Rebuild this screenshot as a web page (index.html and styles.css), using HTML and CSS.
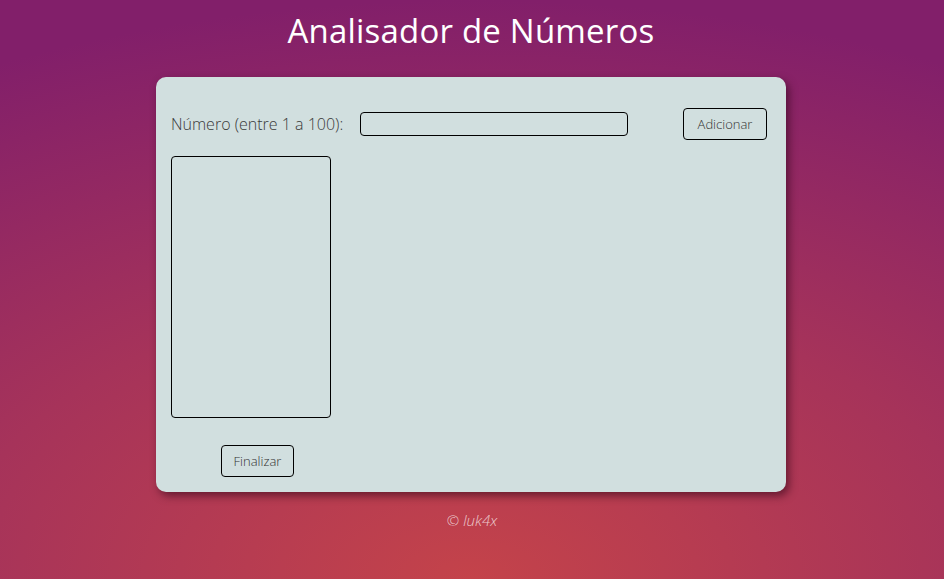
FILE: index.html
```html
<!DOCTYPE html>
<html lang="pt-BR">
<head>
<meta charset="utf-8">
<title>Analisador de Números</title>
<link rel="stylesheet" href="styles.css">
</head>
<body>
  <header class="header">
    <h1 class="title">Analisador de Números</h1>
  </header>
  <main class="card">
    <div class="row">
      <label class="label" for="num">Número (entre 1 a 100):</label>
      <input class="input" id="num" type="number">
      <button class="btn btn-add">Adicionar</button>
    </div>
    <select class="list" size="10"></select>
    <div class="actions">
      <button class="btn btn-end">Finalizar</button>
    </div>
  </main>
  <footer class="footer">&copy; luk4x</footer>
</body>
</html>
```
FILE: styles.css
```css
html, body {
  margin: 0;
  height: 100%;
}
body {
  font-family: "Open Sans", "Liberation Sans", sans-serif;
  font-weight: 300;
  background: radial-gradient(ellipse 110% 100% at 50% 100%, #c4434a 0%, #a6335a 50%, #821f6a 100%);
  background-color: #821f6a;
  display: flex;
  flex-direction: column;
  align-items: center;
  padding-right: 2px;
  box-sizing: border-box;
}
.header {
  padding-top: 9px;
  height: 77px;
  box-sizing: border-box;
}
.title {
  margin: 0;
  color: #fff;
  font-size: 33px;
  font-weight: 400;
  line-height: 44px;
  letter-spacing: 0.2px;
}
.card {
  width: 630px;
  height: 415px;
  box-sizing: border-box;
  background: #d1dfdf;
  border-radius: 10px;
  box-shadow: 3px 4px 8px rgba(40, 0, 20, 0.55);
  padding: 31px 19px 15px 15px;
  display: flex;
  flex-direction: column;
}
.row {
  display: flex;
  align-items: center;
  height: 32px;
}
.label {
  font-size: 16px;
  color: #3a3a3a;
  width: 189px;
  white-space: nowrap;
}
.input {
  width: 268px;
  height: 24px;
  box-sizing: border-box;
  border: 1px solid #000;
  border-radius: 4px;
  background: transparent;
  padding: 0 4px;
  margin: 0;
}
.btn {
  font-family: inherit;
  font-weight: 300;
  font-size: 13px;
  color: #333;
  background: transparent;
  border: 1px solid #000;
  border-radius: 4px;
  height: 32px;
  padding: 0;
  margin: 0;
}
.btn-add {
  width: 84px;
  margin-left: auto;
}
.list {
  margin-top: 16px;
  width: 160px;
  height: 262px;
  box-sizing: border-box;
  border: 1px solid #000;
  border-radius: 4px;
  background: transparent;
  padding: 0;
  overflow: hidden;
}
.actions {
  margin-top: 27px;
  padding-left: 50px;
}
.btn-end {
  width: 73px;
}
.footer {
  margin-top: 18px;
  color: rgba(255, 255, 255, 0.72);
  font-style: italic;
  font-size: 15px;
  margin-left: 2px;
}
```
